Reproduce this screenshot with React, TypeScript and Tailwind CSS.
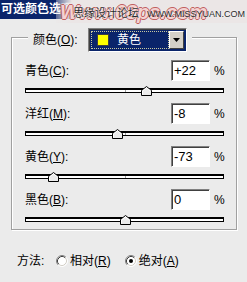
import React from 'react';

type Row = { label: string; accel: string; value: number; text: string };

const rows: Row[] = [
  { label: '青色', accel: 'C', value: 22, text: '+22' },
  { label: '洋红', accel: 'M', value: -8, text: '-8' },
  { label: '黄色', accel: 'Y', value: -73, text: '-73' },
  { label: '黑色', accel: 'B', value: 0, text: '0' },
];

const Radio: React.FC<{ checked?: boolean }> = ({ checked }) => (
  <svg width="12" height="12" viewBox="0 0 12 12" className="shrink-0">
    <circle cx="6" cy="6" r="5" fill="#fff" />
    <path d="M2.11 9.89 A5.5 5.5 0 0 1 9.89 2.11" fill="none" stroke="#808080" />
    <path d="M9.89 2.11 A5.5 5.5 0 0 1 2.11 9.89" fill="none" stroke="#fff" />
    <path d="M2.82 9.18 A4.5 4.5 0 0 1 9.18 2.82" fill="none" stroke="#404040" />
    <path d="M9.18 2.82 A4.5 4.5 0 0 1 2.82 9.18" fill="none" stroke="#d4d0c8" />
    {checked && <circle cx="6" cy="6" r="2" fill="#000" />}
  </svg>
);

const SliderRow: React.FC<{ row: Row }> = ({ row }) => {
  const pos = ((row.value + 100) / 200) * 100;
  return (
    <div className="flex flex-col">
      <div className="flex items-center h-[21px]">
        <span className="flex-1 text-[12px] leading-none">
          {row.label}(<span className="underline">{row.accel}</span>):
        </span>
        <div className="w-[39px] h-[21px] bg-white border border-t-[#808080] border-l-[#808080] border-b-white border-r-white shadow-[inset_1px_1px_0_#404040] pl-[2px] text-[13px] leading-[19px]">
          {row.text}
        </div>
        <span className="ml-[4px] w-[10px] text-[12px] leading-none">%</span>
      </div>
      <div className="relative mt-[7px] h-[5px] border-x border-t-2 border-b border-black bg-white">
        <span className="absolute left-1/2 top-0 h-full w-px bg-[#a0a0a0]" />
        <svg
          width="11"
          height="10"
          viewBox="0 0 11 10"
          className="absolute top-[-4px]"
          style={{ left: `calc(${pos}% - 5px)` }}
        >
          <polygon points="0.5,4.5 5.5,0.5 10.5,4.5 10.5,9.5 0.5,9.5" fill="#ebebeb" stroke="#000" />
          <polyline points="1.5,8.5 1.5,5 5.5,1.8 9.5,5" fill="none" stroke="#fff" />
        </svg>
      </div>
    </div>
  );
};

export default function App() {
  return (
    <div className="relative w-[247px] h-[282px] overflow-hidden bg-[#ebebeb] text-black font-['Liberation_Sans','Noto_Sans_CJK_SC',sans-serif]">
      <div className="h-[19px] bg-[#0a246a] text-white font-bold text-[12px] leading-[19px] pl-[1px]">
        可选颜色选项
      </div>

      {/* watermark */}
      <div className="absolute left-[56px] top-0 w-[191px] h-[23px] bg-[linear-gradient(to_right,rgba(235,230,230,0.35),#ebe6e6_16px)]">
        <span className="absolute left-[4px] top-[1px] text-[20px] leading-[23px] italic font-bold text-[#f3d2d2] [text-shadow:1px_0_#c06060,-1px_0_#c06060,0_1px_#c06060,0_-1px_#c06060]">
          Www.68ps.com
        </span>
        <span className="absolute left-[17px] top-[7px] text-[11px] leading-[12px] text-[#2a2a2a] [text-shadow:0_0_2px_#fff,0_0_1px_#fff]">
          思缘设计论坛
        </span>
        <span className="absolute left-[91px] top-[9px] text-[9px] leading-[10px] text-[#2a2a2a] [text-shadow:0_0_2px_#fff]">
          WWW.MISSYUAN.COM
        </span>
      </div>

      <div className="ml-[11px] mt-[18px] w-[226px] border border-[#a0a0a0] shadow-[inset_1px_1px_0_#fff,1px_1px_0_#fff] pb-[7px]">
        <div className="relative -mt-[10px] ml-[16px] w-fit flex items-center h-[24px] px-[5px] bg-[#ebebeb]">
          <span className="w-[55px] text-[12px] leading-none">
            颜色(<span className="underline">O</span>):
          </span>
          <div className="flex w-[99px] h-[24px] border border-t-[#808080] border-l-[#808080] border-b-white border-r-white shadow-[inset_1px_1px_0_#404040] p-[2px] bg-[#0a246a]">
            <div className="flex-1 flex items-center border border-dotted border-[#c8c8a0] pl-[5px]">
              <span className="w-[12px] h-[12px] bg-[#ffff00] border border-[#404040]" />
              <span className="ml-[8px] text-white text-[12px] leading-none">黄色</span>
            </div>
            <div className="w-[15px] flex items-center justify-center bg-[#d4d0c8] border border-t-white border-l-white border-b-[#404040] border-r-[#404040]">
              <svg width="7" height="4" viewBox="0 0 7 4">
                <polygon points="0,0 7,0 3.5,4" fill="#000" />
              </svg>
            </div>
          </div>
        </div>

        <div className="mt-[8px] pl-[13px] pr-[12px] flex flex-col gap-[10px]">
          {rows.map((r) => (
            <SliderRow key={r.accel} row={r} />
          ))}
        </div>
      </div>

      <div className="mt-[24px] pl-[17px] flex items-center h-[14px] text-[12px] leading-none">
        <span className="w-[39px]">方法:</span>
        <Radio />
        <span className="ml-[2px]">
          相对(<span className="underline">R</span>)
        </span>
        <span className="ml-[14px]">
          <Radio checked />
        </span>
        <span className="ml-[2px]">
          绝对(<span className="underline">A</span>)
        </span>
      </div>
    </div>
  );
}
